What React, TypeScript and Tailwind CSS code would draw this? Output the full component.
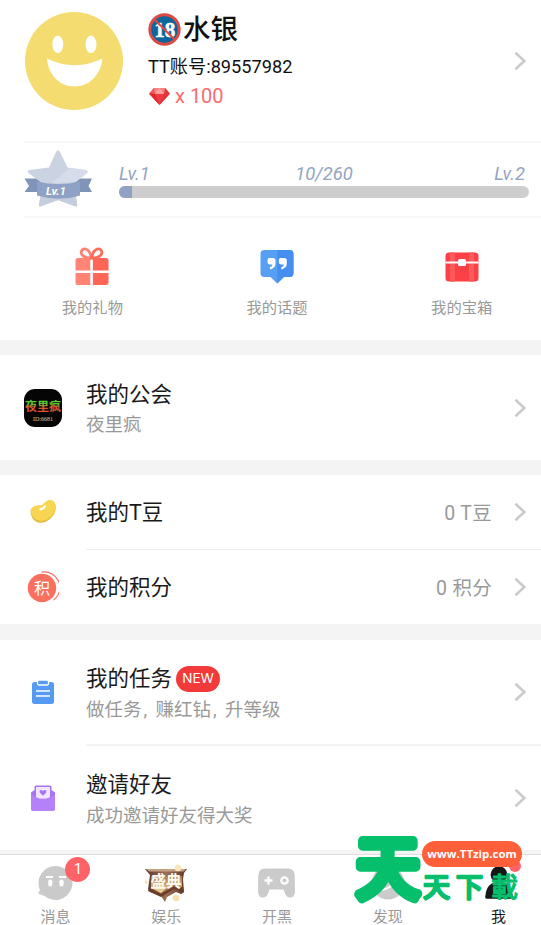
import type { ReactNode } from "react";

function Chevron() {
  return (
    <svg width="12" height="20" viewBox="0 0 12 20" fill="none" className="shrink-0">
      <path d="M1.500 1.800 10.300 10l-8.800 8.200" stroke="#cbcbcb" strokeWidth="2.600" />
    </svg>
  );
}

function SmileAvatar() {
  return (
    <svg width="98" height="98" viewBox="0 0 98 98" className="shrink-0">
      <circle cx="49" cy="49" r="49" fill="#f5dc70" />
      <ellipse cx="32.8" cy="32.3" rx="5.5" ry="8.7" fill="#fff" />
      <ellipse cx="66" cy="32.3" rx="5.5" ry="8.7" fill="#fff" />
      <path d="M22 46.500q27.500 13.500 55.500 0C76 62 65 74.500 49.500 74.500S23 62 22 46.500Z" fill="#fff" />
    </svg>
  );
}

function AgeBadge() {
  return (
    <svg width="33" height="33" viewBox="0 0 33 33" className="shrink-0">
      <circle cx="16.500" cy="16.500" r="15" fill="#0d679d" />
      <text x="16.800" y="23.500" textAnchor="middle" fontSize="21" fontWeight="700" fill="#fff" stroke="#fff" strokeWidth=".5" fontFamily="'Liberation Serif', serif">18</text>
      <circle cx="16.500" cy="16.500" r="14.700" fill="none" stroke="#dc4a44" strokeWidth="2.900" />
      <path d="m6.200 6.200 20.600 20.600" stroke="#dc4a44" strokeWidth="2" />
    </svg>
  );
}

function Gem() {
  return (
    <svg width="21" height="17" viewBox="0 0 22 18" className="shrink-0">
      <path d="M5 0h12l5 6-11 12L0 6Z" fill="#f03a41" />
      <path d="M5 0 0 6h6Z" fill="#f2565a" />
      <path d="M5 0h12l-1 6H6Z" fill="#fb8180" />
      <path d="M11 0 6 6h10Z" fill="#fca6a0" />
      <path d="m17 0 5 6h-6Z" fill="#e4383f" />
      <path d="M0 6h6l5 12Z" fill="#df292f" />
      <path d="M22 6h-6l-5 12Z" fill="#e2343a" />
    </svg>
  );
}

function LevelStar() {
  return (
    <svg width="70" height="58" viewBox="0 0 70 58" className="shrink-0">
      <path d="M.5 28.500H20v13.500H.5L5 36ZM68 28.500H50v13.500h18L64.500 36Z" fill="#8093b8" />
      <path d="M33 2q2-3.500 4 0l7.500 15.500 18 2.500q3 .7 1 3L50 34l4 20.500q.5 2.500-2 1.800L35 50l-17 6.300q-2.500.7-2-1.800L20 34 5.500 23q-2-2.300 1-3L26 17.500Z" fill="#cbd3e2" transform="translate(-1 0)" />
      <path d="m45 18.500 17 1.700q3 .7 1 3L52 32 28 33Z" fill="#d6dcea" />
      <path d="M16.500 46h35.500l1.300 9q.3 2-2 1.300L34 50l-17 6.300q-2.300.7-2-1.300Z" fill="#c4cede" />
      <path d="M13 31.500q21 5 43 0v14q-21 6.500-43 0Z" fill="#8fa1c4" />
      <text x="32" y="44.500" textAnchor="middle" fontSize="11.500" fontWeight="700" fontStyle="italic" fill="#fff" fontFamily="Roboto, sans-serif">Lv.1</text>
    </svg>
  );
}

function GiftIcon() {
  return (
    <svg width="34" height="40" viewBox="0 0 34 40">
      <g fill="none" strokeWidth="2.800">
        <path d="M16.500 11C9 11 5 7.500 6.500 4s8-3.500 10 7Z" stroke="#ff7f70" />
        <path d="M16.500 11c8 0 11.500-3.500 10-7s-8-3.500-10 7Z" stroke="#fa6d5b" />
      </g>
      <path d="M3 11h12.300v12.500H.5V14Q.5 11 3 11ZM.5 26h14.800v12H3Q.5 38 .5 35.500Z" fill="#ff8476" />
      <path d="M17.900 11H31q2.500 0 2.500 3v9.500H17.900ZM17.900 26h15.600v9.500q0 2.500-2.500 2.500H17.900Z" fill="#ff6656" />
    </svg>
  );
}

function TopicIcon() {
  return (
    <svg width="34" height="36" viewBox="0 0 34 36">
      <path d="M4.500 1h25Q33.500 1 33.500 5v19q0 4-4 4H24l-6.800 6.500L10.500 28h-6q-4 0-4-4V5q0-4 4-4Z" fill="#579ff4" />
      <path d="M17.200 1h12.300q4 0 4 4v19q0 4-4 4H24l-6.800 6.500Z" fill="#468ff0" />
      <path d="M9.500 9h3.500q2.500 0 2.500 2.500v2.800q0 5-5.500 6.200v-2.200q2.500-.8 2.500-2.800h-3q-2-.2-2-2.200v-2q0-2.300 2-2.300ZM20.800 9h3.500q2.500 0 2.500 2.500v2.800q0 5-5.500 6.200v-2.200q2.500-.8 2.500-2.800h-3q-2-.2-2-2.200v-2q0-2.300 2-2.300Z" fill="#fff" />
    </svg>
  );
}

function ChestIcon() {
  return (
    <svg width="34" height="30" viewBox="0 0 34 30">
      <rect x=".5" y=".5" width="33" height="29" rx="3.500" fill="#fb4145" />
      <path d="M5 .5h5v29H5ZM24 .5h5v29h-5Z" fill="#fc5a5c" />
      <path d="M.5 9.500h33v2H.5Z" fill="#fff" />
      <rect x="13" y="7" width="8" height="7" rx="1.500" fill="#fff" />
    </svg>
  );
}

function GuildLogo() {
  return (
    <svg width="38" height="38" viewBox="0 0 38 38">
      <defs>
        <linearGradient id="guild" x1="0" y1="0" x2="0" y2="1">
          <stop offset=".4" stopColor="#55d030" />
          <stop offset=".65" stopColor="#e2502e" />
        </linearGradient>
      </defs>
      <rect width="38" height="38" rx="11" fill="#050505" />
      <text x="19" y="21.500" textAnchor="middle" fontSize="12" fontWeight="700" fill="url(#guild)" fontFamily="'Noto Sans CJK SC', sans-serif">夜里疯</text>
      <text x="19" y="32" textAnchor="middle" fontSize="6" fill="#d3c9a4" fontFamily="'Liberation Serif', serif">ID:6681</text>
    </svg>
  );
}

function BeanIcon() {
  return (
    <svg width="26" height="24" viewBox="0 0 26 24">
      <path d="M.7 13C-.2 7 6 5 10.500 5.500 14 5.500 15 .3 20 .3c6 0 7 7.500 4.500 12.700C22 18.500 16 23.500 9.500 22.700 4 22 1.200 17 .7 13Z" fill="#e8bb3c" />
      <path d="M.7 11.500C.2 7 6 5 10.500 5.500 14 5.500 15 .3 20 .3c6 0 6.500 7 4 11.700C21.500 17 16 21.500 10 20.700 4.500 20 1.200 15.500.7 11.500Z" fill="#f8d653" />
      <path d="M10.500 9.300q3.200-.5 4.300-3" fill="none" stroke="#fff" strokeWidth="2.200" strokeLinecap="round" />
    </svg>
  );
}

function PointsIcon() {
  return (
    <svg width="32" height="32" viewBox="0 0 32 32">
      <circle cx="15" cy="17" r="14.200" fill="#fb6f61" />
      <path d="M14.500 1.200A15.500 15.500 0 0 1 26.500 29" fill="none" stroke="#fb6f61" strokeWidth="1.200" />
      <text x="15" y="22.700" textAnchor="middle" fontSize="16" fill="#fff" fontFamily="'Noto Sans CJK SC', sans-serif">积</text>
    </svg>
  );
}

function TaskIcon() {
  return (
    <svg width="22" height="24" viewBox="0 0 22 24">
      <rect y="2" width="22" height="22" rx="2.500" fill="#559bf3" />
      <rect x="5.500" y="0" width="11" height="5" rx="1.500" fill="#559bf3" stroke="#fff" strokeWidth="1.300" />
      <path d="M4 11h14M4 16h14" stroke="#fff" strokeWidth="1.400" />
    </svg>
  );
}

function InviteIcon() {
  return (
    <svg width="24" height="26" viewBox="0 0 24 26">
      <path d="M0 7.500 3.500 5V2q0-1.500 1.500-1.500h14Q20.500.5 20.500 2v3L24 7.500V24q0 1.700-1.700 1.700H1.700Q0 25.700 0 24Z" fill="#a775f3" />
      <path d="M5 2h14v10.500L12 16l-7-3.500Z" fill="#f1e5ff" />
      <path d="M0 9.500 5 12.200q7 3.300 14 0l5-2.700V24q0 1.700-1.700 1.700H1.700Q0 25.700 0 24Z" fill="#b481fb" />
      <path d="M12 10.800 8.900 7.700q-1-2 .8-2.700 1.500-.3 2.300 1.200.8-1.500 2.300-1.200 1.800.7.800 2.700Z" fill="#a775f3" />
    </svg>
  );
}

function MessageIcon() {
  return (
    <svg width="36" height="36" viewBox="0 0 36 36">
      <path d="M18.500 1a17 17 0 1 1-11 30L1 28.500l2-3.500A17 17 0 0 1 18.500 1Z" fill="#cacaca" />
      <path d="M9 12h7M22 12h7" stroke="#fff" strokeWidth="2.200" />
      <path d="M13.300 16.500v3M24.500 16.500v3" stroke="#fff" strokeWidth="4.200" strokeLinecap="round" />
    </svg>
  );
}

function FestivalIcon() {
  return (
    <svg width="44" height="38" viewBox="0 1 44 38">
      <defs>
        <linearGradient id="gold" x1="0" y1="0" x2="0" y2="1">
          <stop stopColor="#a67855" />
          <stop offset="1" stopColor="#f8d894" />
        </linearGradient>
        <linearGradient id="wood" x1="0" y1="0" x2="1" y2="0">
          <stop stopColor="#5d3526" />
          <stop offset=".5" stopColor="#9a7058" />
          <stop offset="1" stopColor="#5d3526" />
        </linearGradient>
      </defs>
      <path d="M1 6h42l-3 4-1 6 1 13-3 2-5-2-9 5-2 5-4-6-11-4-2-3 2-14Z" fill="url(#wood)" />
      <path d="M2 6h40l-2.500 2.500H5Z" fill="#c5a184" />
      <circle cx="34" cy="5" r="3.300" fill="#fbe5b8" />
      <circle cx="2.500" cy="19" r="1.800" fill="#fbe5b8" />
      <path d="m5 25 12 6 14-8 8 1 1 5-3 2-2-4-5-1-13 8-13-6Z" fill="#6b3c28" />
      <path d="M7 13h31v11l-7-2-8 3-6 5-10-5Z" fill="url(#gold)" />
      <text x="22" y="23.500" textAnchor="middle" fontSize="15.500" fontWeight="700" fill="#fffaf0" fontFamily="'Noto Sans CJK SC', sans-serif">盛典</text>
      <circle cx="32" cy="35" r="3.300" fill="#f9e0ac" />
    </svg>
  );
}

function GamepadIcon() {
  return (
    <svg width="37" height="30" viewBox="0 0 37 30">
      <path d="M7 .5h23q6.500 0 6.700 7L37 24q-.5 5.500-5 5.500-3.500 0-5-4l-1.500-4h-14l-1.500 4q-1.500 4-5 4-4.500 0-5-5.500L.3 7.500Q.5.500 7 .5Z" fill="#cbcbcb" />
      <path d="M6.500 12.500h8M10.500 8.500v8" stroke="#fff" strokeWidth="2.300" />
      <circle cx="26.500" cy="12.500" r="3.200" fill="none" stroke="#fff" strokeWidth="2.200" />
    </svg>
  );
}

function DiscoverIcon() {
  return (
    <svg width="34" height="34" viewBox="0 0 34 34">
      <circle cx="17" cy="17" r="16.500" fill="#cbcbcb" />
      <path d="M2 21q9 6 18-1t12-5" fill="none" stroke="#fff" strokeWidth="2" />
      <circle cx="19" cy="11" r="3" fill="#fff" />
    </svg>
  );
}

function ProfileIcon() {
  return (
    <svg width="28" height="36" viewBox="0 0 30 36">
      <circle cx="15" cy="9" r="9" fill="#161616" />
      <path d="M2 35q-2.500 0-1.500-4Q2 17 15 17t14.500 14q1 4-1.500 4Z" fill="#161616" />
    </svg>
  );
}

function Shortcut({ icon, label }: { icon: ReactNode; label: string }) {
  return (
    <div className="flex flex-1 flex-col items-center">
      <div className="flex h-10 items-center">{icon}</div>
      <span className="mt-[11px] text-[15.3px] leading-5 text-[#999]">{label}</span>
    </div>
  );
}

function Row({
  icon,
  title,
  subtitle,
  value,
  isNew,
}: {
  icon: ReactNode;
  title: ReactNode;
  subtitle?: ReactNode;
  value?: string;
  isNew?: boolean;
}) {
  return (
    <div className="flex h-full items-center pr-[15px]">
      <div className="flex w-[86px] shrink-0 justify-center">{icon}</div>
      <div className={subtitle ? "flex-1 pt-[5px]" : "flex-1 pt-[3px]"}>
        <div className="flex h-[30px] items-center text-[21.5px] text-[#1a1a1a]">
          {title}
          {isNew && (
            <span className="mb-0.5 ml-1 flex h-[26px] w-11 items-center justify-center rounded-full bg-[#f33a3a] font-['Inter'] text-[13.5px] text-white">
              NEW
            </span>
          )}
        </div>
        {subtitle && <div className="h-[30px] text-[18.5px] leading-[30px] text-[#999]">{subtitle}</div>}
      </div>
      {value && <span className="mt-1 mr-[22px] text-[19.5px] tracking-[0.3px] text-[#999]">{value}</span>}
      <Chevron />
    </div>
  );
}

function Tab({ icon, label, active }: { icon: ReactNode; label: string; active?: boolean }) {
  return (
    <div className="flex flex-1 flex-col items-center pt-[9px]">
      <div className="relative flex h-[38px] shrink-0 items-center">{icon}</div>
      <span className={`mt-[7px] text-[15px] leading-4 ${active ? "text-[#1a1a1a]" : "text-[#999]"}`}>{label}</span>
    </div>
  );
}

function Watermark() {
  return (
    <div className="pointer-events-none absolute top-[829px] left-[348px] h-20 w-[180px]">
      <svg
        width="180"
        height="80"
        viewBox="0 0 180 80"
        fill="#06bf6d"
        stroke="#06bf6d"
        strokeLinejoin="round"
        strokeLinecap="round"
        fontFamily="'Noto Sans CJK SC', sans-serif"
        className="overflow-visible"
      >
        <text x="8" y="60.500" fontSize="64" fontWeight="400" strokeWidth="9" transform="scale(1 1.060)">天</text>
        <text x="75" y="68" fontSize="27" fontWeight="400" strokeWidth="2.600">天</text>
        <text x="108" y="68" fontSize="27" fontWeight="400" strokeWidth="2.600">下</text>
        <text x="143" y="68" fontSize="27" fontWeight="500" strokeWidth="1">載</text>
      </svg>
      <span className="absolute top-[12px] left-[74px] flex h-[26px] w-[100px] items-center justify-center rounded-full bg-[#ff5f39] font-['Open_Sans'] text-[11.4px] font-bold text-white">
        www.TTzip.com
      </span>
    </div>
  );
}

export default function App() {
  return (
    <div className="relative h-[925px] w-[541px] overflow-hidden bg-[#f4f4f4] font-[Roboto,'Noto_Sans_CJK_SC',sans-serif]">
      <section className="h-[340px] bg-white">
        <div className="flex h-[141px] pt-3 pr-[15px] pl-[25px]">
          <SmileAvatar />
          <div className="ml-[25px] flex-1">
            <div className="flex h-[35px] items-center text-[27.5px] font-medium text-[#111]">
              <AgeBadge />
              <span className="ml-0.5">水银</span>
            </div>
            <div className="mt-2 h-6 text-[18.2px] leading-6 text-[#111]">TT账号:89557982</div>
            <div className="mt-[5px] flex h-6 items-center gap-[5px] pl-px text-[20px] text-[#fb6c70]">
              <Gem />
              <span>x 100</span>
            </div>
          </div>
          <div className="flex h-[98px] items-center">
            <Chevron />
          </div>
        </div>
        <div className="ml-6 flex h-[77px] border-y-2 border-[#f6f6f6] pt-[7px] pr-3">
          <LevelStar />
          <div className="ml-[25px] flex-1 pt-2.5">
            <div className="flex h-[26px] items-center justify-between pt-0.5 pr-1 text-[18.4px] text-[#93a4c5] italic">
              <span>Lv.1</span>
              <span className="ml-1">10/260</span>
              <span>Lv.2</span>
            </div>
            <div className="h-3 overflow-hidden rounded-full bg-[#cecece]">
              <div className="h-full w-[13px] bg-[#8fa1c4]" />
            </div>
          </div>
        </div>
        <div className="-mr-[13px] flex pt-[29px]">
          <Shortcut icon={<GiftIcon />} label="我的礼物" />
          <Shortcut icon={<TopicIcon />} label="我的话题" />
          <Shortcut icon={<ChestIcon />} label="我的宝箱" />
        </div>
      </section>

      <section className="mt-[15px] h-[105px] bg-white">
        <Row icon={<GuildLogo />} title="我的公会" subtitle="夜里疯" />
      </section>

      <section className="mt-[15px] h-[149px] bg-white">
        <div className="h-[74px]">
          <Row icon={<BeanIcon />} title="我的T豆" value="0 T豆" />
        </div>
        <div className="ml-[86px] h-px bg-[#eee]" />
        <div className="h-[74px]">
          <Row icon={<PointsIcon />} title="我的积分" value="0 积分" />
        </div>
      </section>

      <section className="mt-4 h-[210px] bg-white">
        <div className="h-[104px]">
          <Row
            icon={<TaskIcon />}
            title="我的任务"
            subtitle={
              <>
                做任务<span className="inline-block w-[14px] pl-[2px]">,</span>赚红钻
                <span className="inline-block w-[14px] pl-[2px]">,</span>升等级
              </>
            }
            isNew
          />
        </div>
        <div className="ml-[86px] h-[2px] bg-[#f4f4f4]" />
        <div className="h-[104px]">
          <Row icon={<InviteIcon />} title="邀请好友" subtitle="成功邀请好友得大奖" />
        </div>
      </section>

      <nav className="mt-1 -mr-[13px] flex h-[71px] border-t border-[#dedede] bg-white">
        <Tab
          icon={
            <>
              <MessageIcon />
              <span className="absolute -top-[7px] left-[28px] flex size-[25px] items-center justify-center rounded-full bg-[#ff6367] text-[15px] text-white">
                1
              </span>
            </>
          }
          label="消息"
        />
        <Tab icon={<FestivalIcon />} label="娱乐" />
        <Tab icon={<GamepadIcon />} label="开黑" />
        <Tab icon={<DiscoverIcon />} label="发现" />
        <Tab
          icon={
            <>
              <ProfileIcon />
              <span className="absolute -top-1 left-6 size-3 rounded-full bg-[#ff6367]" />
            </>
          }
          label="我"
          active
        />
      </nav>
      <Watermark />
    </div>
  );
}
